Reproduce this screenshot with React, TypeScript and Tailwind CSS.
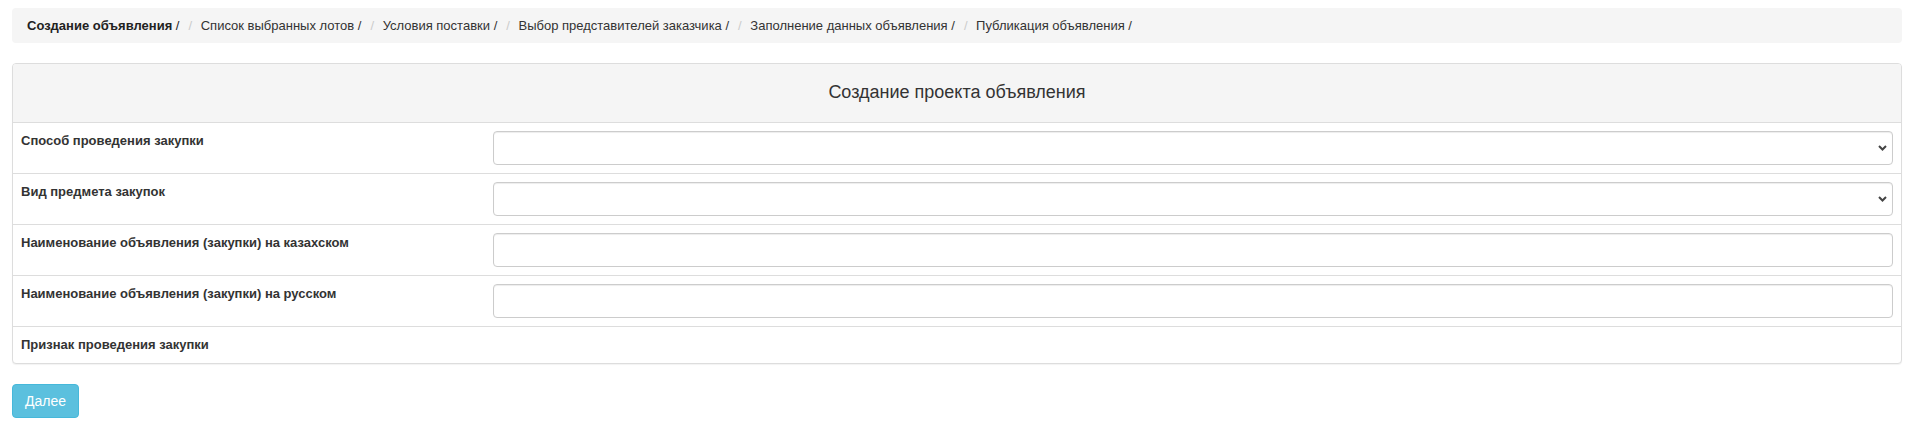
const steps = [
  'Создание объявления',
  'Список выбранных лотов',
  'Условия поставки',
  'Выбор представителей заказчика',
  'Заполнение данных объявления',
  'Публикация объявления',
];

const fields: { label: string; type: 'select' | 'input' | 'none' }[] = [
  { label: 'Способ проведения закупки', type: 'select' },
  { label: 'Вид предмета закупок', type: 'select' },
  { label: 'Наименование объявления (закупки) на казахском', type: 'input' },
  { label: 'Наименование объявления (закупки) на русском', type: 'input' },
  { label: 'Признак проведения закупки', type: 'none' },
];

export default function App() {
  return (
    <div className="min-h-screen bg-white px-[12px] pt-[8px] font-['Liberation_Sans',Arial,sans-serif] text-[#333]">
      <ol className="mb-5 flex flex-wrap items-center rounded-[4px] bg-[#f5f5f5] px-[15px] py-[8px] text-[13px] leading-[19px]">
        {steps.map((step, i) => (
          <li key={step} className="flex items-center">
            {i > 0 && <span className="ml-[4px] px-[5px] text-[#ccc]">/&nbsp;</span>}
            <span className={i === 0 ? 'font-bold text-[#222]' : 'text-[#333]'}>
              {step} <span className="font-normal">/</span>
            </span>
          </li>
        ))}
      </ol>

      <div className="rounded-[4px] border border-[#ddd] bg-white shadow-[0_1px_1px_rgba(0,0,0,0.05)]">
        <div className="rounded-t-[3px] bg-[#f5f5f5] pb-[18px] pt-[16px] text-center text-[18px] leading-[24px] text-[#333]">
          Создание проекта объявления
        </div>
        {fields.map((field) => (
          <div key={field.label} className="flex border-t border-[#ddd]">
            <div className="w-1/4 p-2 text-[13px] font-bold leading-[20px] text-[#333]">
              {field.label}
            </div>
            <div className="flex-1 p-2">
              {field.type === 'select' && (
                <div className="relative">
                  <select className="block h-[34px] w-full appearance-none rounded-[4px] border border-[#ccc] bg-white px-3 text-[14px] shadow-[inset_0_1px_1px_rgba(0,0,0,0.075)] outline-none" />
                  {/* native-looking chevron */}
                  <svg
                    className="pointer-events-none absolute right-[6px] top-[14px] h-[6px] w-[9px]"
                    viewBox="0 0 9 6"
                    fill="none"
                  >
                    <path d="M1 1l3.5 3.5L8 1" stroke="#444" strokeWidth="2" />
                  </svg>
                </div>
              )}
              {field.type === 'input' && (
                <input
                  type="text"
                  className="block h-[34px] w-full rounded-[4px] border border-[#ccc] bg-white px-3 text-[14px] shadow-[inset_0_1px_1px_rgba(0,0,0,0.075)] outline-none"
                />
              )}
            </div>
          </div>
        ))}
      </div>

      <button className="mt-[20px] h-[34px] rounded-[4px] border border-[#46b8da] bg-[#5bc0de] px-[12px] text-[14px] leading-[20px] text-white">
        Далее
      </button>
    </div>
  );
}
